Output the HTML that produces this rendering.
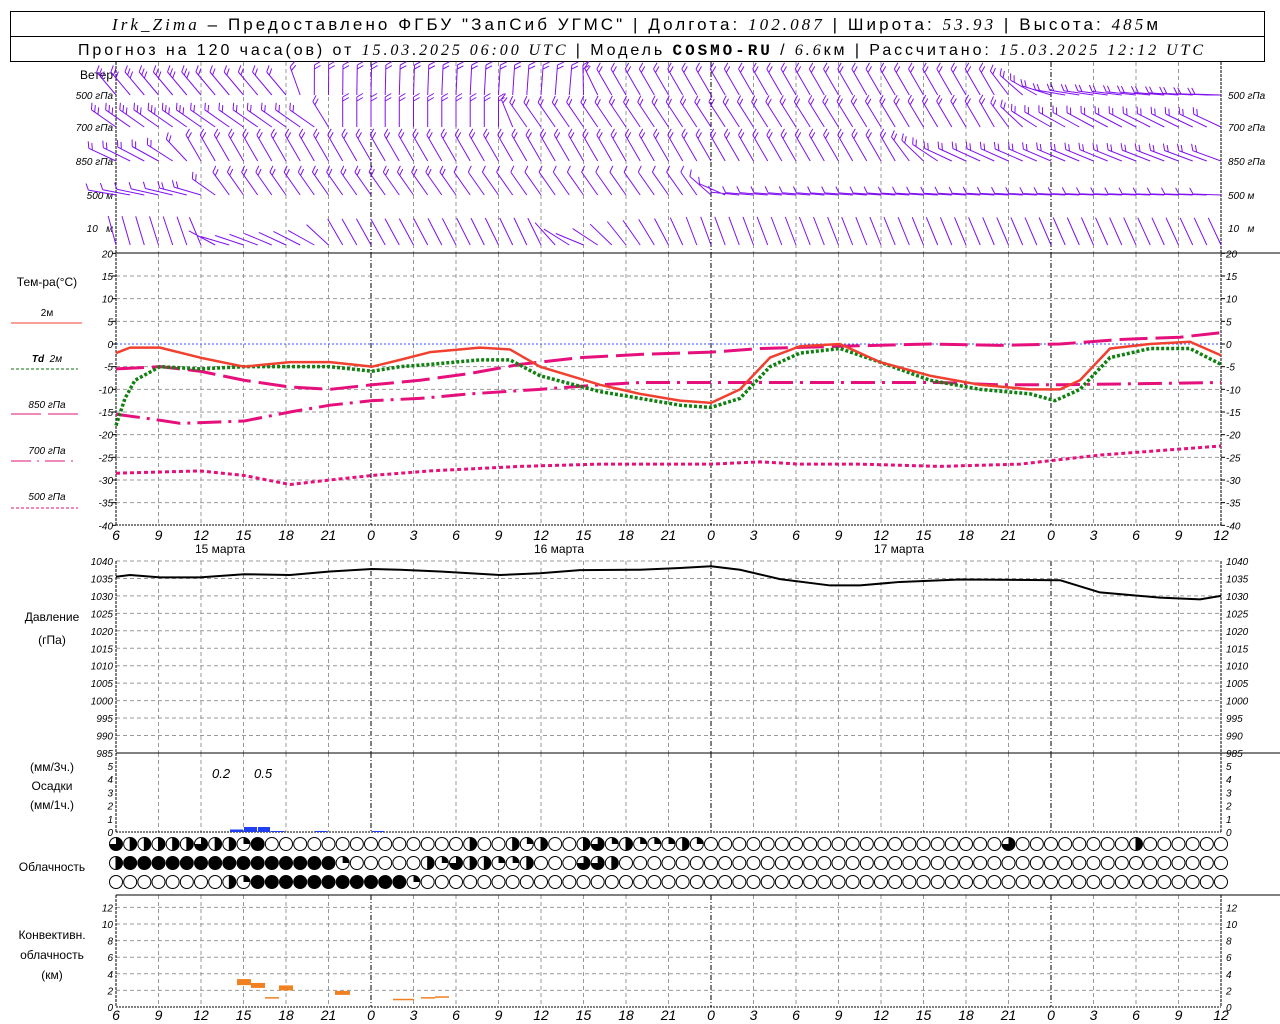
<!DOCTYPE html>
<html><head><meta charset="utf-8"><style>
html,body{margin:0;padding:0;background:#fff;width:1280px;height:1024px;overflow:hidden}
svg{display:block}
.t{font-family:"Liberation Sans",sans-serif;font-size:12px;fill:#000}
.n{font-family:"Liberation Sans",sans-serif;font-size:10px;font-style:italic;fill:#000}
.h{font-family:"Liberation Sans",sans-serif;font-size:17px;fill:#000}
.i{font-family:"Liberation Serif",serif;font-style:italic}
</style></head><body>
<svg id="s" width="1280" height="1024" xmlns="http://www.w3.org/2000/svg">
<rect x="10.5" y="11.5" width="1254" height="25" fill="none" stroke="#000"/>
<rect x="10.5" y="36.5" width="1254" height="25" fill="none" stroke="#000"/>
<text class="h" x="112" y="30" textLength="1046" lengthAdjust="spacing"><tspan class="i">Irk_Zima</tspan> – Предоставлено ФГБУ "ЗапСиб УГМС" | Долгота: <tspan class="i">102.087</tspan> | Широта: <tspan class="i">53.93</tspan> | Высота: <tspan class="i">485</tspan>м</text>
<text class="h" x="78" y="55" style="font-size:16px" textLength="1125" lengthAdjust="spacing">Прогноз на 120 часа(ов) от <tspan class="i">15.03.2025 06:00 UTC</tspan> | Модель <tspan font-weight="bold" font-family="Liberation Mono">COSMO-RU</tspan> / <tspan class="i">6.6</tspan>км | Рассчитано: <tspan class="i">15.03.2025 12:12 UTC</tspan></text>

<g class="t" text-anchor="end">
<text x="113" y="79">Ветер</text>
<text x="113" y="99" class="n" style="font-size:10px">500 гПа</text>
<text x="113" y="131" class="n">700 гПа</text>
<text x="113" y="165" class="n">850 гПа</text>
<text x="113" y="199" class="n">500 м</text>
<text x="113" y="232" class="n">10 &#160; м</text>
</g>
<g class="n">
<text x="1228" y="99">500 гПа</text>
<text x="1228" y="131">700 гПа</text>
<text x="1228" y="165">850 гПа</text>
<text x="1228" y="199">500 м</text>
<text x="1228" y="232">10 &#160; м</text>
</g>
<g class="t" text-anchor="middle">
<text x="47" y="286">Тем-ра(°C)</text>
<text x="47" y="316" class="n" style="font-style:normal">2м</text>
<text x="47" y="362" class="n"><tspan font-weight="bold">Td</tspan> &#160;2м</text>
<text x="47" y="408" class="n">850 гПа</text>
<text x="47" y="454" class="n">700 гПа</text>
<text x="47" y="500" class="n">500 гПа</text>
<text x="52" y="621">Давление</text>
<text x="52" y="644">(гПа)</text>
<text x="52" y="771">(мм/3ч.)</text>
<text x="52" y="790">Осадки</text>
<text x="52" y="809">(мм/1ч.)</text>
<text x="52" y="871">Облачность</text>
<text x="52" y="939">Конвективн.</text>
<text x="52" y="959">облачность</text>
<text x="52" y="979">(км)</text>
<text x="220" y="553">15 марта</text>
<text x="559" y="553">16 марта</text>
<text x="899" y="553">17 марта</text>
</g>
<g class="n" style="font-size:12px" font-style="italic">
<text x="212" y="778" style="font-size:13px">0.2</text>
<text x="254" y="778" style="font-size:13px">0.5</text>
</g>
<line x1="11" y1="323" x2="82" y2="323" stroke="#f04030"/>
<line x1="11" y1="369" x2="78" y2="369" stroke="#107010" stroke-dasharray="3,2"/>
<line x1="11" y1="414" x2="82" y2="414" stroke="#e0107a" stroke-dasharray="30,7"/>
<line x1="11" y1="461" x2="78" y2="461" stroke="#e0107a" stroke-dasharray="20,6,2,6"/>
<line x1="11" y1="508" x2="78" y2="508" stroke="#e0107a" stroke-dasharray="3,2"/>
<g id="g"></g>
</svg>
<script>
var S=document.getElementById('g'),NS='http://www.w3.org/2000/svg';
function el(n,a){var e=document.createElementNS(NS,n);for(var k in a)e.setAttribute(k,a[k]);S.appendChild(e);return e;}
function tx(x,y,s,anch){var e=el('text',{x:x,y:y,'class':'n','text-anchor':anch||'start'});e.textContent=s;}
var X0=116,X1=1221,DX=42.5;
var labs=[6,9,12,15,18,21,0,3,6,9,12,15,18,21,0,3,6,9,12,15,18,21,0,3,6,9,12];
function vgrid(y0,y1){for(var i=1;i<26;i++){var x=X0+i*DX,day=labs[i]==0;
el('line',{x1:x,y1:y0,x2:x,y2:y1,stroke:day?'#000':'#999','stroke-dasharray':day?'5,2,1,2':'4,3'});}}
vgrid(62,253);vgrid(253,525);vgrid(561,753);vgrid(753,832);vgrid(895,1007);
function hgrid(y){el('line',{x1:X0,y1:y,x2:X1,y2:y,stroke:'#999','stroke-dasharray':'4,3'});}
function ty(t){return 344-t*4.533;}
for(var t=15;t>-40;t-=5){if(t!=0)hgrid(ty(t));}
el('line',{x1:X0,y1:344,x2:X1,y2:344,stroke:'#3050ff','stroke-dasharray':'2,2'});
for(var t=20;t>=-40;t-=5){var y=ty(t);tx(113,y+4,t,'end');tx(1226,y+4,t);el('line',{x1:112,y1:y,x2:116,y2:y,stroke:'#000'});el('line',{x1:1221,y1:y,x2:1225,y2:y,stroke:'#000'});}
function py(p){return 561+(1040-p)*3.49;}
for(var p=1040;p>=985;p-=5){var y=py(p);if(p>985)hgrid(y);tx(113,y+4,p,'end');tx(1226,y+4,p);}
for(var v=0;v<=5;v++){var y=832-v*13.2;tx(113,y+4,v,'end');tx(1226,y+4,v);}
function cy(h){return 1007-h*8.3;}
for(var h=0;h<=12;h+=2){var y=cy(h);if(h>0)hgrid(y);tx(113,y+4,h,'end');tx(1226,y+4,h);}
el('line',{x1:X0,y1:253,x2:1280,y2:253,stroke:'#000'});
el('line',{x1:X0,y1:525,x2:X1,y2:525,stroke:'#000','stroke-dasharray':'2,1'});
el('line',{x1:X0,y1:753,x2:1280,y2:753,stroke:'#000'});
el('line',{x1:X0,y1:832,x2:X1,y2:832,stroke:'#000','stroke-dasharray':'2,1'});
el('line',{x1:X0,y1:895,x2:1280,y2:895,stroke:'#000'});
el('line',{x1:X0,y1:1007,x2:X1,y2:1007,stroke:'#000','stroke-dasharray':'2,1'});
[[62,525],[561,832],[895,1007]].forEach(function(r){el('line',{x1:X0,y1:r[0],x2:X0,y2:r[1],stroke:'#000','stroke-dasharray':'3,1'});el('line',{x1:X1,y1:r[0],x2:X1,y2:r[1],stroke:'#000','stroke-dasharray':'3,1'});});
for(var i=0;i<27;i++){var x=X0+i*DX;var e=el('text',{x:x,y:540,'class':'n','text-anchor':'middle',style:'font-size:14px'});e.textContent=labs[i];
var e2=el('text',{x:x,y:1020,'class':'n','text-anchor':'middle',style:'font-size:14px'});e2.textContent=labs[i];}
function path(pts,f,col,w,da){var d='';pts.forEach(function(p,k){d+=(k?'L':'M')+p[0]+','+f(p[1]);});var a={d:d,fill:'none',stroke:col,'stroke-width':w,'stroke-linejoin':'round'};if(da)a['stroke-dasharray']=da;el('path',a);}
var pk='#e6107c';
path([[116,-28.5],[200,-28],[244,-29],[290,-31],[330,-30],[372,-29],[430,-28],[520,-27],[600,-26.5],[711,-26.5],[760,-26],[800,-26.5],[860,-26.5],[940,-27],[1020,-26.5],[1060,-25.5],[1100,-24.5],[1221,-22.5]],ty,pk,3,'4,3');
path([[116,-15.5],[150,-16.5],[180,-17.5],[244,-17],[290,-15],[330,-13.5],[372,-12.5],[420,-12],[470,-11],[540,-10],[600,-9],[640,-8.5],[711,-8.5],[800,-8.5],[880,-8.5],[940,-8.5],[1000,-9],[1060,-9],[1221,-8.5]],ty,pk,3,'24,7,3,7');
path([[116,-5.5],[160,-5],[200,-6],[244,-8],[290,-9.5],[330,-10],[372,-9],[420,-8],[470,-6.5],[520,-4.5],[580,-3],[640,-2.3],[711,-1.8],[760,-1],[840,-0.5],[930,0],[1000,-0.3],[1060,0],[1120,1],[1180,1.5],[1221,2.5]],ty,pk,3,'28,8');
path([[116,-18],[125,-12],[135,-8],[160,-5],[200,-5.5],[244,-5],[290,-5],[330,-5],[372,-6],[400,-5],[430,-4.5],[480,-3.5],[510,-3.5],[540,-7],[600,-10.5],[640,-12],[680,-13.5],[711,-14],[740,-12],[770,-5],[800,-2],[840,-1],[880,-4],[930,-8],[980,-10],[1030,-11],[1055,-12.5],[1080,-10],[1110,-3],[1150,-1],[1190,-1],[1221,-4.5]],ty,'#108010',3.5,'3,2');
path([[116,-2],[130,-0.8],[160,-0.8],[200,-3],[244,-5],[290,-4],[330,-4],[372,-5],[400,-3.5],[430,-1.8],[480,-0.8],[510,-1.2],[540,-5],[600,-9],[640,-11],[680,-12.5],[711,-13],[740,-10],[770,-3],[800,-0.5],[840,0],[880,-4],[930,-7],[980,-9],[1030,-10],[1060,-10],[1080,-8],[1110,-1],[1150,0],[1190,0.5],[1221,-2.5]],ty,'#f04030',2.5);
path([[116,1035.5],[130,1036],[160,1035.3],[200,1035.3],[244,1036.2],[290,1036],[330,1037],[372,1037.7],[400,1037.5],[440,1037],[500,1036],[540,1036.5],[580,1037.4],[640,1037.5],[680,1038],[711,1038.5],[740,1037.5],[780,1034.8],[830,1033],[860,1033],[900,1034],[960,1034.7],[1060,1034.5],[1100,1031],[1160,1029.5],[1200,1029],[1221,1030]],py,'#000',2);
[[230,244,2.5],[244,258,5],[258,271,5],[271,285,1],[315,328,1],[372,385,1]].forEach(function(b){el('rect',{x:b[0],y:832-b[2],width:b[1]-b[0]-1,height:b[2],fill:'#2040f0'});});
[[237,251,3,6],[251,265,2.6,5],[279,293,2.3,5],[265,279,1.1,1.5],[335,350,1.7,4],[393,414,0.9,1.5],[421,435,1.1,1.5],[435,449,1.2,1.5]].forEach(function(b){el('rect',{x:b[0],y:cy(b[2])-b[3]/2,width:b[1]-b[0],height:b[3],fill:'#f08020'});});
var SP=(X1-X0)/78;
function row(defs,y){var a=[];for(var i=0;i<79;i++)a.push(0);for(var k in defs)a[k]=defs[k];
a.forEach(function(f,i){var cx=X0+i*SP;el('circle',{cx:cx,cy:y,r:6.5,fill:f==4?'#000':'#fff',stroke:'#000','stroke-width':1});
if(f>0&&f<4){var r=6.5,ang=f*Math.PI/2;var ex=cx+r*Math.sin(ang),ey=y-r*Math.cos(ang);
el('path',{d:'M'+cx+','+y+'L'+cx+','+(y-r)+'A'+r+','+r+' 0 '+(f>2?1:0)+' 1 '+ex+','+ey+'Z',fill:'#000'});}
if(f==2)el('line',{x1:cx,y1:y-r,x2:cx,y2:y+r,stroke:'#000'});});}
row({0:3,1:2,2:2,3:2,4:2,5:2,6:3,7:2,8:2,9:1,10:4,25:2,28:2,29:1,30:2,33:2,34:3,35:1,36:2,37:1,38:1,39:1,40:2,41:1,63:3,72:2},844);
var r2={0:2,16:1,22:2,23:1,24:3,25:2,26:2,27:1,28:1,29:2,33:3,34:3,35:2};for(var i=1;i<=15;i++)r2[i]=4;row(r2,863);
var r3={8:2,9:1,21:1};for(var i=10;i<=20;i++)r3[i]=4;row(r3,882);
function kf(pts,x){for(var k=1;k<pts.length;k++){if(x<=pts[k][0]){var a=pts[k-1],b=pts[k];return a[1]+(b[1]-a[1])*(x-a[0])/(b[0]-a[0]);}}return pts[pts.length-1][1];}
var rows=[
{y:95,L:30,a:[[116,-40],[290,-40],[310,0],[580,5],[600,-30],[1000,-30],[1060,-80],[1221,-88]],n:[[116,3],[300,2],[1221,2]]},
{y:127,L:30,a:[[116,-55],[320,-55],[340,0],[500,0],[520,-35],[1000,-30],[1040,-60],[1221,-65]],n:[[116,3],[300,2],[1221,2]]},
{y:161,L:30,a:[[116,-65],[170,-60],[200,-30],[900,-30],[950,-65],[1221,-70]],n:[[116,2],[1221,2]]},
{y:195,L:28,a:[[116,-80],[200,-75],[230,-35],[700,-35],[740,-85],[1221,-88]],n:[[116,1],[230,2],[700,1],[1221,1]]},
{y:245,L:30,a:[[116,-15],[200,-20],[220,-75],[320,-60],[340,-30],[540,-25],[580,-70],[620,-40],[700,-20],[1221,-25]],n:[[116,0],[1221,0]]}];
rows.forEach(function(R){var d='';for(var i=0;i<79;i++){var x=X0+i*SP,th=kf(R.a,x)*Math.PI/180;
var dx=Math.sin(th),dy=-Math.cos(th),tx_=x+R.L*dx,ty_=R.y+R.L*dy;d+='M'+x.toFixed(1)+','+R.y+'L'+tx_.toFixed(1)+','+ty_.toFixed(1);
var nb=Math.round(kf(R.n,x));var bt=th+Math.PI/3;for(var b=0;b<nb;b++){var bx=tx_-dx*b*4,by=ty_-dy*b*4;d+='M'+bx.toFixed(1)+','+by.toFixed(1)+'l'+(7*Math.sin(bt)).toFixed(1)+','+(-7*Math.cos(bt)).toFixed(1);}}
el('path',{d:d,fill:'none',stroke:'#8010f0','stroke-width':1});});
</script>
</body></html>
